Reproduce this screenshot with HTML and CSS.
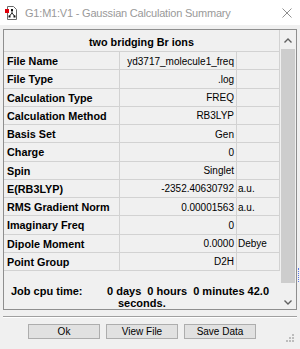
FILE: index.html
```html
<!DOCTYPE html>
<html>
<head>
<meta charset="utf-8">
<link rel="stylesheet" href="styles.css">
</head>
<body>
<div class="win">
  <header class="titlebar">
    <svg class="appicon" width="14" height="14" viewBox="0 0 14 14">
      <path d="M3.5 0.5h6l3 3v10h-9z" fill="#fff" stroke="#6a6a6a"/>
      <path d="M8 3.5v3.5M8 7l-2.5 3M8 7l2.5 3" stroke="#222" stroke-width="1" fill="none"/>
      <rect x="7" y="3" width="2" height="2" fill="#111"/>
      <rect x="4.5" y="9.5" width="2" height="2" fill="#111"/>
      <rect x="9.5" y="9.5" width="2" height="2" fill="#111"/>
      <rect x="1" y="3" width="4" height="4" fill="#e0000a"/>
    </svg>
    <span class="title">G1:M1:V1 - Gaussian Calculation Summary</span>
    <svg class="close" width="10" height="10" viewBox="0 0 10 10">
      <path d="M0.5 0.5L9.5 9.5M9.5 0.5L0.5 9.5" stroke="#8f8f8f" stroke-width="1" fill="none"/>
    </svg>
  </header>

  <section class="panel">
    <div class="content">
      <div class="grid">
        <div class="head">two bridging Br ions</div>
        <div class="k">File Name</div><div class="v">yd3717_molecule1_freq</div><div class="u"></div>
        <div class="k">File Type</div><div class="v">.log</div><div class="u"></div>
        <div class="k">Calculation Type</div><div class="v">FREQ</div><div class="u"></div>
        <div class="k">Calculation Method</div><div class="v">RB3LYP</div><div class="u"></div>
        <div class="k">Basis Set</div><div class="v">Gen</div><div class="u"></div>
        <div class="k">Charge</div><div class="v">0</div><div class="u"></div>
        <div class="k">Spin</div><div class="v">Singlet</div><div class="u"></div>
        <div class="k">E(RB3LYP)</div><div class="v">-2352.40630792</div><div class="u">a.u.</div>
        <div class="k">RMS Gradient Norm</div><div class="v">0.00001563</div><div class="u">a.u.</div>
        <div class="k">Imaginary Freq</div><div class="v">0</div><div class="u"></div>
        <div class="k">Dipole Moment</div><div class="v">0.0000</div><div class="u">Debye</div>
        <div class="k">Point Group</div><div class="v">D2H</div><div class="u"></div>
      </div>
      <div class="job">
        <span class="jl">Job cpu time:</span>
        <span class="jv"><span>0 days  0 hours  0 minutes 42.0</span><span class="l2">seconds.</span></span>
      </div>
    </div>
    <div class="sbar">
      <div class="arrow up">
        <svg width="8" height="5" viewBox="0 0 8 5"><polyline points="0.5,4.5 4,1 7.5,4.5" fill="none" stroke="#606060" stroke-width="1.4"/></svg>
      </div>
      <div class="thumb"></div>
      <div class="arrow down">
        <svg width="8" height="5" viewBox="0 0 8 5"><polyline points="0.5,0.5 4,4 7.5,0.5" fill="none" stroke="#606060" stroke-width="1.4"/></svg>
      </div>
    </div>
  </section>

  <div class="sep"></div>

  <div class="buttons">
    <button class="btn">Ok</button>
    <button class="btn">View File</button>
    <button class="btn">Save Data</button>
  </div>

  <svg class="grip" width="8" height="8" viewBox="0 0 8 8">
    <rect x="6" y="0" width="2" height="2" fill="#bdbdbd"/>
    <rect x="3" y="3" width="2" height="2" fill="#bdbdbd"/>
    <rect x="6" y="3" width="2" height="2" fill="#bdbdbd"/>
    <rect x="0" y="6" width="2" height="2" fill="#bdbdbd"/>
    <rect x="3" y="6" width="2" height="2" fill="#bdbdbd"/>
    <rect x="6" y="6" width="2" height="2" fill="#bdbdbd"/>
  </svg>
  <div class="blip"></div>
</div>
</body>
</html>
```

FILE: styles.css
```css
* { box-sizing: border-box; }
html, body { margin: 0; padding: 0; }
body {
  width: 300px;
  height: 349px;
  background: #f0f0f0;
  font-family: "Liberation Sans", Arial, sans-serif;
  color: #000;
  overflow: hidden;
}
.win { position: relative; width: 300px; height: 349px; }

.titlebar {
  height: 25px;
  background: #fff;
  display: flex;
  align-items: center;
}
.appicon { margin-left: 4px; flex: none; }
.title {
  margin-left: 7px;
  font-size: 11px;
  letter-spacing: -0.2px;
  color: #999;
  white-space: nowrap;
}
.close { margin-left: auto; margin-right: 8px; flex: none; }

.panel {
  margin: 4px 0 0 3px;
  width: 294px;
  height: 281px;
  border: 1px solid #8e8e8e;
  display: flex;
}
.content { flex: 1; display: flex; flex-direction: column; min-width: 0; }

.grid {
  display: grid;
  grid-template-columns: 116px 117px 1fr;
  grid-template-rows: 22px;
  grid-auto-rows: 18.25px;
}
.head {
  grid-column: 1 / -1;
  border-right: 1px solid #d2d2d2;
  border-bottom: 1px solid #d2d2d2;
  font-weight: bold;
  font-size: 10.8px;
  display: flex;
  align-items: center;
  justify-content: center;
  padding-top: 2px;
}
.k, .v, .u {
  border-right: 1px solid #d2d2d2;
  border-bottom: 1px solid #d2d2d2;
  display: flex;
  align-items: center;
  white-space: nowrap;
  padding-top: 1px;
}
.k { font-weight: bold; font-size: 10.8px; padding-left: 3px; }
.v { font-size: 10px; justify-content: flex-end; padding-right: 2px; }
.u { font-size: 10px; padding-left: 1px; }

.job {
  display: flex;
  padding: 14px 0 0 7px;
  font-weight: bold;
  font-size: 11px;
  line-height: 12px;
}
.jl { width: 96px; flex: none; }
.jv { white-space: pre; }
.jv span { display: block; }
.jv .l2 { padding-left: 11px; }

.sbar {
  width: 16px;
  flex: none;
  display: flex;
  flex-direction: column;
  align-items: center;
}
.arrow {
  width: 16px;
  display: flex;
  justify-content: center;
}
.arrow.up { height: 18px; padding-top: 8px; }
.arrow.down { height: 17px; margin-top: auto; padding-top: 8px; }
.thumb {
  width: 14px;
  height: 234px;
  margin-top: 1px;
  background: #cdcdcd;
}

.sep {
  margin: 6px 0 0 3px;
  width: 294px;
  height: 2px;
  border-top: 1px solid #a0a0a0;
  border-bottom: 1px solid #fff;
}

.buttons {
  display: flex;
  gap: 6px;
  padding-left: 28px;
  margin-top: 6px;
}
.btn {
  width: 72px;
  height: 15px;
  padding: 0;
  border: 1px solid #adadad;
  background: #e1e1e1;
  font-family: "Liberation Sans", Arial, sans-serif;
  font-size: 10px;
  line-height: 13px;
  color: #000;
}

.grip { position: absolute; right: 6px; bottom: 7px; }
.blip {
  position: absolute;
  left: 298px;
  top: 268px;
  width: 1px;
  height: 14px;
  border-left: 1px dotted #5a78e8;
}
```
